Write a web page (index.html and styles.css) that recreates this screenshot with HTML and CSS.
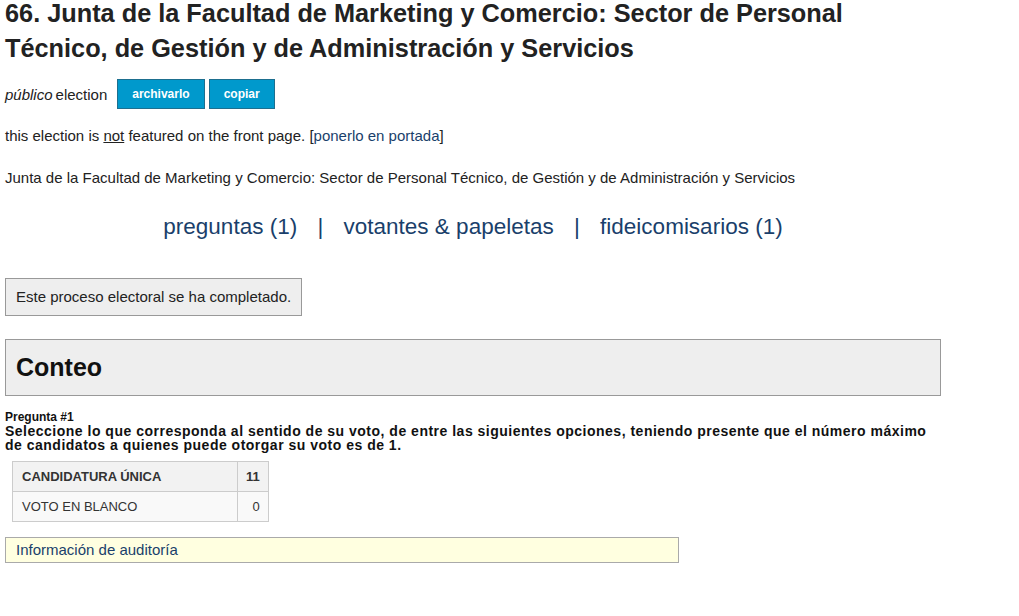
FILE: index.html
```html
<!DOCTYPE html>
<html lang="es">
<head>
    <meta charset="UTF-8">
    <meta name="viewport" content="width=device-width, initial-scale=1.0">
    <title>Junta de la Facultad de Marketing y Comercio</title>
    <link rel="stylesheet" href="styles.css">
</head>
<body>
    <div class="content">
        <h1 class="title">66. Junta de la Facultad de Marketing y Comercio: Sector de Personal Técnico, de Gestión y de Administración y Servicios</h1>

        <div class="meta">
            <em>público</em> election
            <button class="btn">archivarlo</button>
            <button class="btn">copiar</button>
        </div>

        <p class="line">this election is <u>not</u> featured on the front page. [<a href="#">ponerlo en portada</a>]</p>

        <p class="line">Junta de la Facultad de Marketing y Comercio: Sector de Personal Técnico, de Gestión y de Administración y Servicios</p>

        <div class="nav">
            <a href="#">preguntas (1)</a>
            <span class="sep">|</span>
            <a href="#">votantes &amp; papeletas</a>
            <span class="sep">|</span>
            <a href="#">fideicomisarios (1)</a>
        </div>

        <div class="notice">Este proceso electoral se ha completado.</div>

        <div class="section-head">Conteo</div>

        <div class="question">
            <div class="q-label">Pregunta #1</div>
            <div class="q-text">Seleccione lo que corresponda al sentido de su voto, de entre las siguientes opciones, teniendo presente que el número máximo de candidatos a quienes puede otorgar su voto es de 1.</div>
        </div>

        <table class="results">
            <tr class="winner">
                <td>CANDIDATURA ÚNICA</td>
                <td class="num">11</td>
            </tr>
            <tr>
                <td>VOTO EN BLANCO</td>
                <td class="num">0</td>
            </tr>
        </table>

        <div class="audit"><a href="#">Información de auditoría</a></div>
    </div>
</body>
</html>
```

FILE: styles.css
```css
body {
    font-family: "Liberation Sans", Arial, sans-serif;
    font-size: 15px;
    margin: 0;
    padding: 0 5px;
    background-color: #fff;
    color: #222;
}
.content {
    width: 936px;
}
a {
    color: #1a3f6b;
    text-decoration: none;
}
.title {
    max-width: 880px;
    font-size: 25.3px;
    line-height: 35px;
    margin: -4px 0 13px;
    color: #222;
}
.meta {
    display: flex;
    align-items: center;
    gap: 4px;
    height: 30px;
}
.meta em {
    margin-right: -1px;
}
.btn {
    font-family: "Liberation Sans", Arial, sans-serif;
    font-size: 12px;
    font-weight: bold;
    color: #fff;
    background-color: #0099cc;
    border: 1px solid #1d6f8f;
    height: 30px;
    padding: 0 14px;
    cursor: pointer;
}
.meta .btn:first-of-type {
    margin-left: 6px;
}
.line {
    margin: 19px 0 0;
    line-height: 16px;
}
.line + .line {
    margin-top: 26px;
}
.nav {
    text-align: center;
    font-size: 22.5px;
    margin-top: 27px;
    line-height: 28px;
}
.nav a {
    color: #1a3f6b;
}
.sep {
    color: #1a3f6b;
    margin: 0 14px;
}
.notice {
    display: inline-block;
    margin-top: 37px;
    padding: 10px;
    background-color: #eee;
    border: 1px solid #999;
    line-height: 16px;
}
.section-head {
    margin-top: 23px;
    background-color: #eee;
    border: 1px solid #999;
    padding: 0 10px;
    height: 55px;
    line-height: 55px;
    font-size: 25px;
    font-weight: bold;
    color: #111;
}
.question {
    margin-top: 15px;
    color: #111;
}
.q-label {
    font-size: 12px;
    font-weight: bold;
    line-height: 13px;
}
.q-text {
    font-size: 14px;
    font-weight: bold;
    line-height: 14px;
    letter-spacing: 0.5px;
}
.results {
    border-collapse: collapse;
    margin: 9px 0 0 7px;
    color: #333;
    font-size: 13px;
}
.results td {
    border: 1px solid #ccc;
    padding: 0 9px;
    height: 29px;
    background-color: #f9f9f9;
}
.results .winner td {
    background-color: #f2f2f2;
    font-weight: bold;
}
.results td.num {
    text-align: right;
    padding: 0 8px;
}
.results td:first-child {
    width: 206px;
}
.audit {
    margin-top: 15px;
    width: 652px;
    padding: 0 10px;
    height: 24px;
    line-height: 24px;
    background-color: #ffffe0;
    border: 1px solid #aaa;
}
.audit a {
    color: #1a3f6b;
}
```
